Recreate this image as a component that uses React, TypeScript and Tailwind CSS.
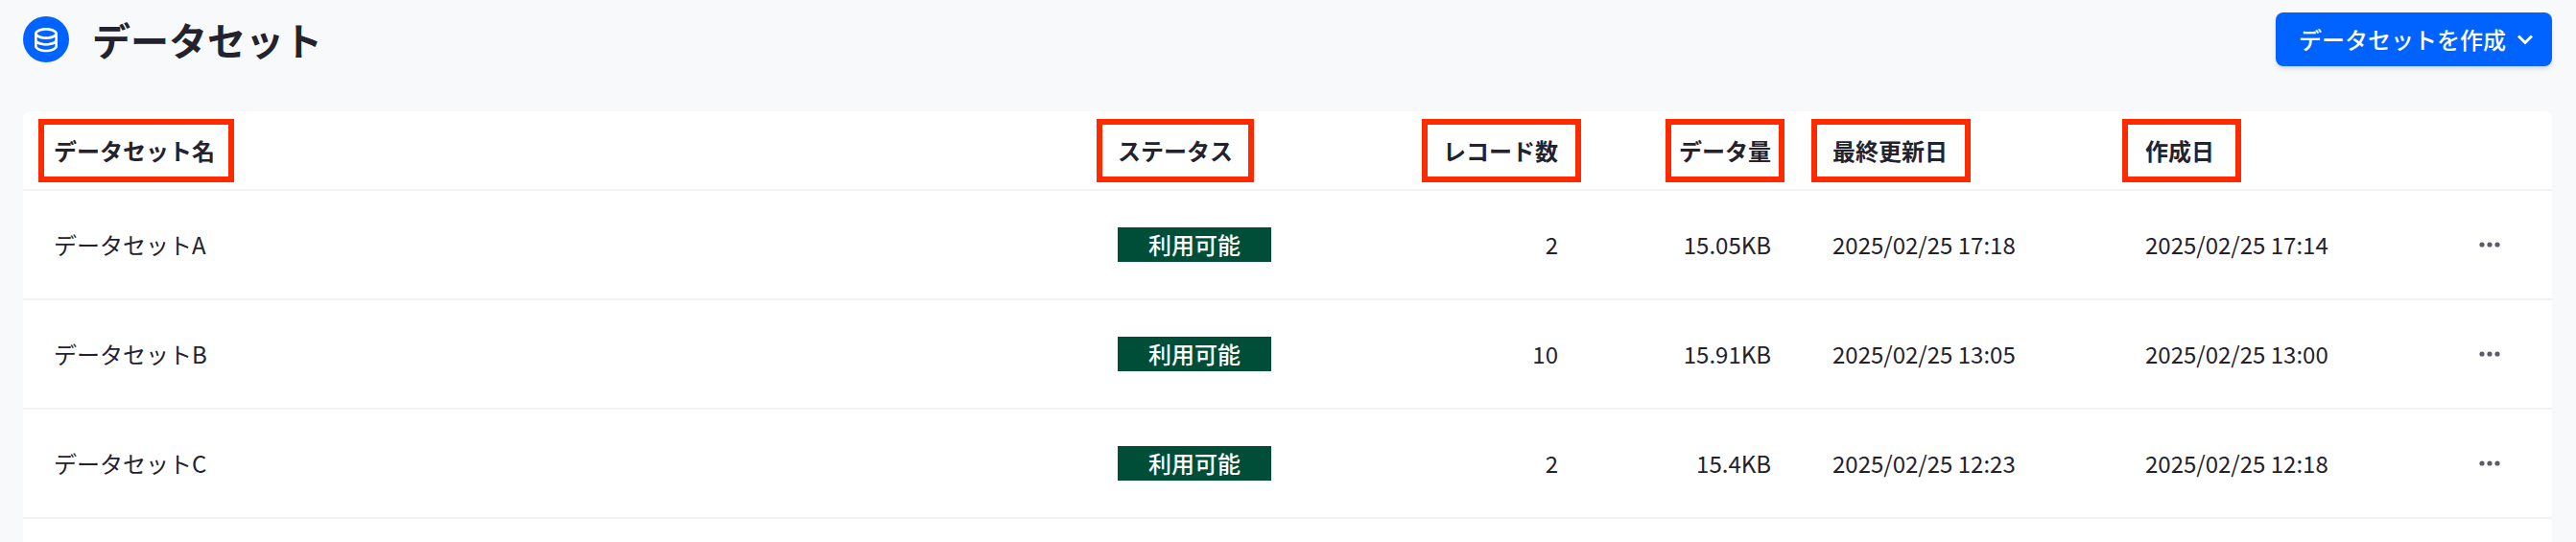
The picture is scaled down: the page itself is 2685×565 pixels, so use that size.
import { RiDatabase2Line } from "react-icons/ri"

const datasets = [
  { name: "データセットA", status: "利用可能", records: 2, size: "15.05KB", updated: "2025/02/25 17:18", created: "2025/02/25 17:14" },
  { name: "データセットB", status: "利用可能", records: 10, size: "15.91KB", updated: "2025/02/25 13:05", created: "2025/02/25 13:00" },
  { name: "データセットC", status: "利用可能", records: 2, size: "15.4KB", updated: "2025/02/25 12:23", created: "2025/02/25 12:18" },
]

const columns = [
  { label: "データセット名", cell: "text-left", frame: "-left-4 -right-5" },
  { label: "ステータス", cell: "w-[323px] text-left", frame: "-inset-x-[22px]" },
  { label: "レコード数", cell: "w-[200px] text-right", frame: "-left-[22px] -right-6" },
  { label: "データ量", cell: "w-[222px] text-right", frame: "-inset-x-[14px]" },
  { label: "最終更新日", cell: "w-[326px] text-left", frame: "-left-[22px] -right-6" },
  { label: "作成日", cell: "w-[326px] text-left", frame: "-left-6 -right-7" },
]

function ChevronIcon() {
  return (
    <svg width="24" height="24" viewBox="0 0 24 24" fill="none" stroke="currentColor" strokeWidth="3" aria-hidden="true">
      <path d="M5 8.5l7 7 7-7" />
    </svg>
  )
}

function MoreIcon() {
  return (
    <svg width="24" height="24" viewBox="0 0 24 24" fill="currentColor" aria-hidden="true">
      <circle cx="4" cy="12" r="2.6" />
      <circle cx="12" cy="12" r="2.6" />
      <circle cx="20" cy="12" r="2.6" />
    </svg>
  )
}

export default function App() {
  return (
    <div className="flex min-h-screen flex-col bg-[#f8f9fb] pt-[13px] pr-[25px] pl-6 font-['Noto_Sans_CJK_JP',sans-serif] text-[#23222d]">
      {/* Page header */}
      <header className="mb-[47px] flex items-center justify-between">
        <div className="flex items-center gap-6">
          <div className="flex size-12 items-center justify-center rounded-full bg-[#0062ff] text-white">
            <RiDatabase2Line className="size-8" />
          </div>
          <h1 className="text-[40px] leading-[56px] font-bold">データセット</h1>
        </div>
        <button className="flex h-14 items-center gap-2 rounded-lg bg-[#0062ff] pr-4 pl-6 text-2xl font-medium text-white shadow-md">
          データセットを作成
          <ChevronIcon />
        </button>
      </header>

      {/* Dataset table */}
      <main className="flex-1 rounded-t-lg bg-white">
        <table className="w-full table-fixed">
          <thead>
            <tr className="h-[82px] border-b-2 border-[#f2f2f3]">
              {columns.map((column) => (
                <th key={column.label} className={`px-8 text-2xl font-bold ${column.cell}`}>
                  <span className="relative inline-block leading-9">
                    {column.label}
                    <span className={`absolute -inset-y-[15px] border-[6px] border-[#ff2a00] ${column.frame}`} />
                  </span>
                </th>
              ))}
              <td className="w-[130px]" />
            </tr>
          </thead>
          <tbody>
            {datasets.map((dataset) => (
              <tr key={dataset.name} className="h-[114px] border-b-2 border-[#f2f2f3] text-2xl">
                <td className="px-8">{dataset.name}</td>
                <td className="px-8">
                  <span className="flex h-9 w-40 items-center justify-center bg-[#004d38] font-medium text-white">
                    {dataset.status}
                  </span>
                </td>
                <td className="px-8 text-right">{dataset.records}</td>
                <td className="px-8 text-right">{dataset.size}</td>
                <td className="px-8">{dataset.updated}</td>
                <td className="px-8">{dataset.created}</td>
                <td>
                  <button aria-label={`${dataset.name}のメニュー`} className="mx-auto flex size-10 items-center justify-center text-[#5c5b6b]">
                    <MoreIcon />
                  </button>
                </td>
              </tr>
            ))}
          </tbody>
        </table>
      </main>
    </div>
  )
}
